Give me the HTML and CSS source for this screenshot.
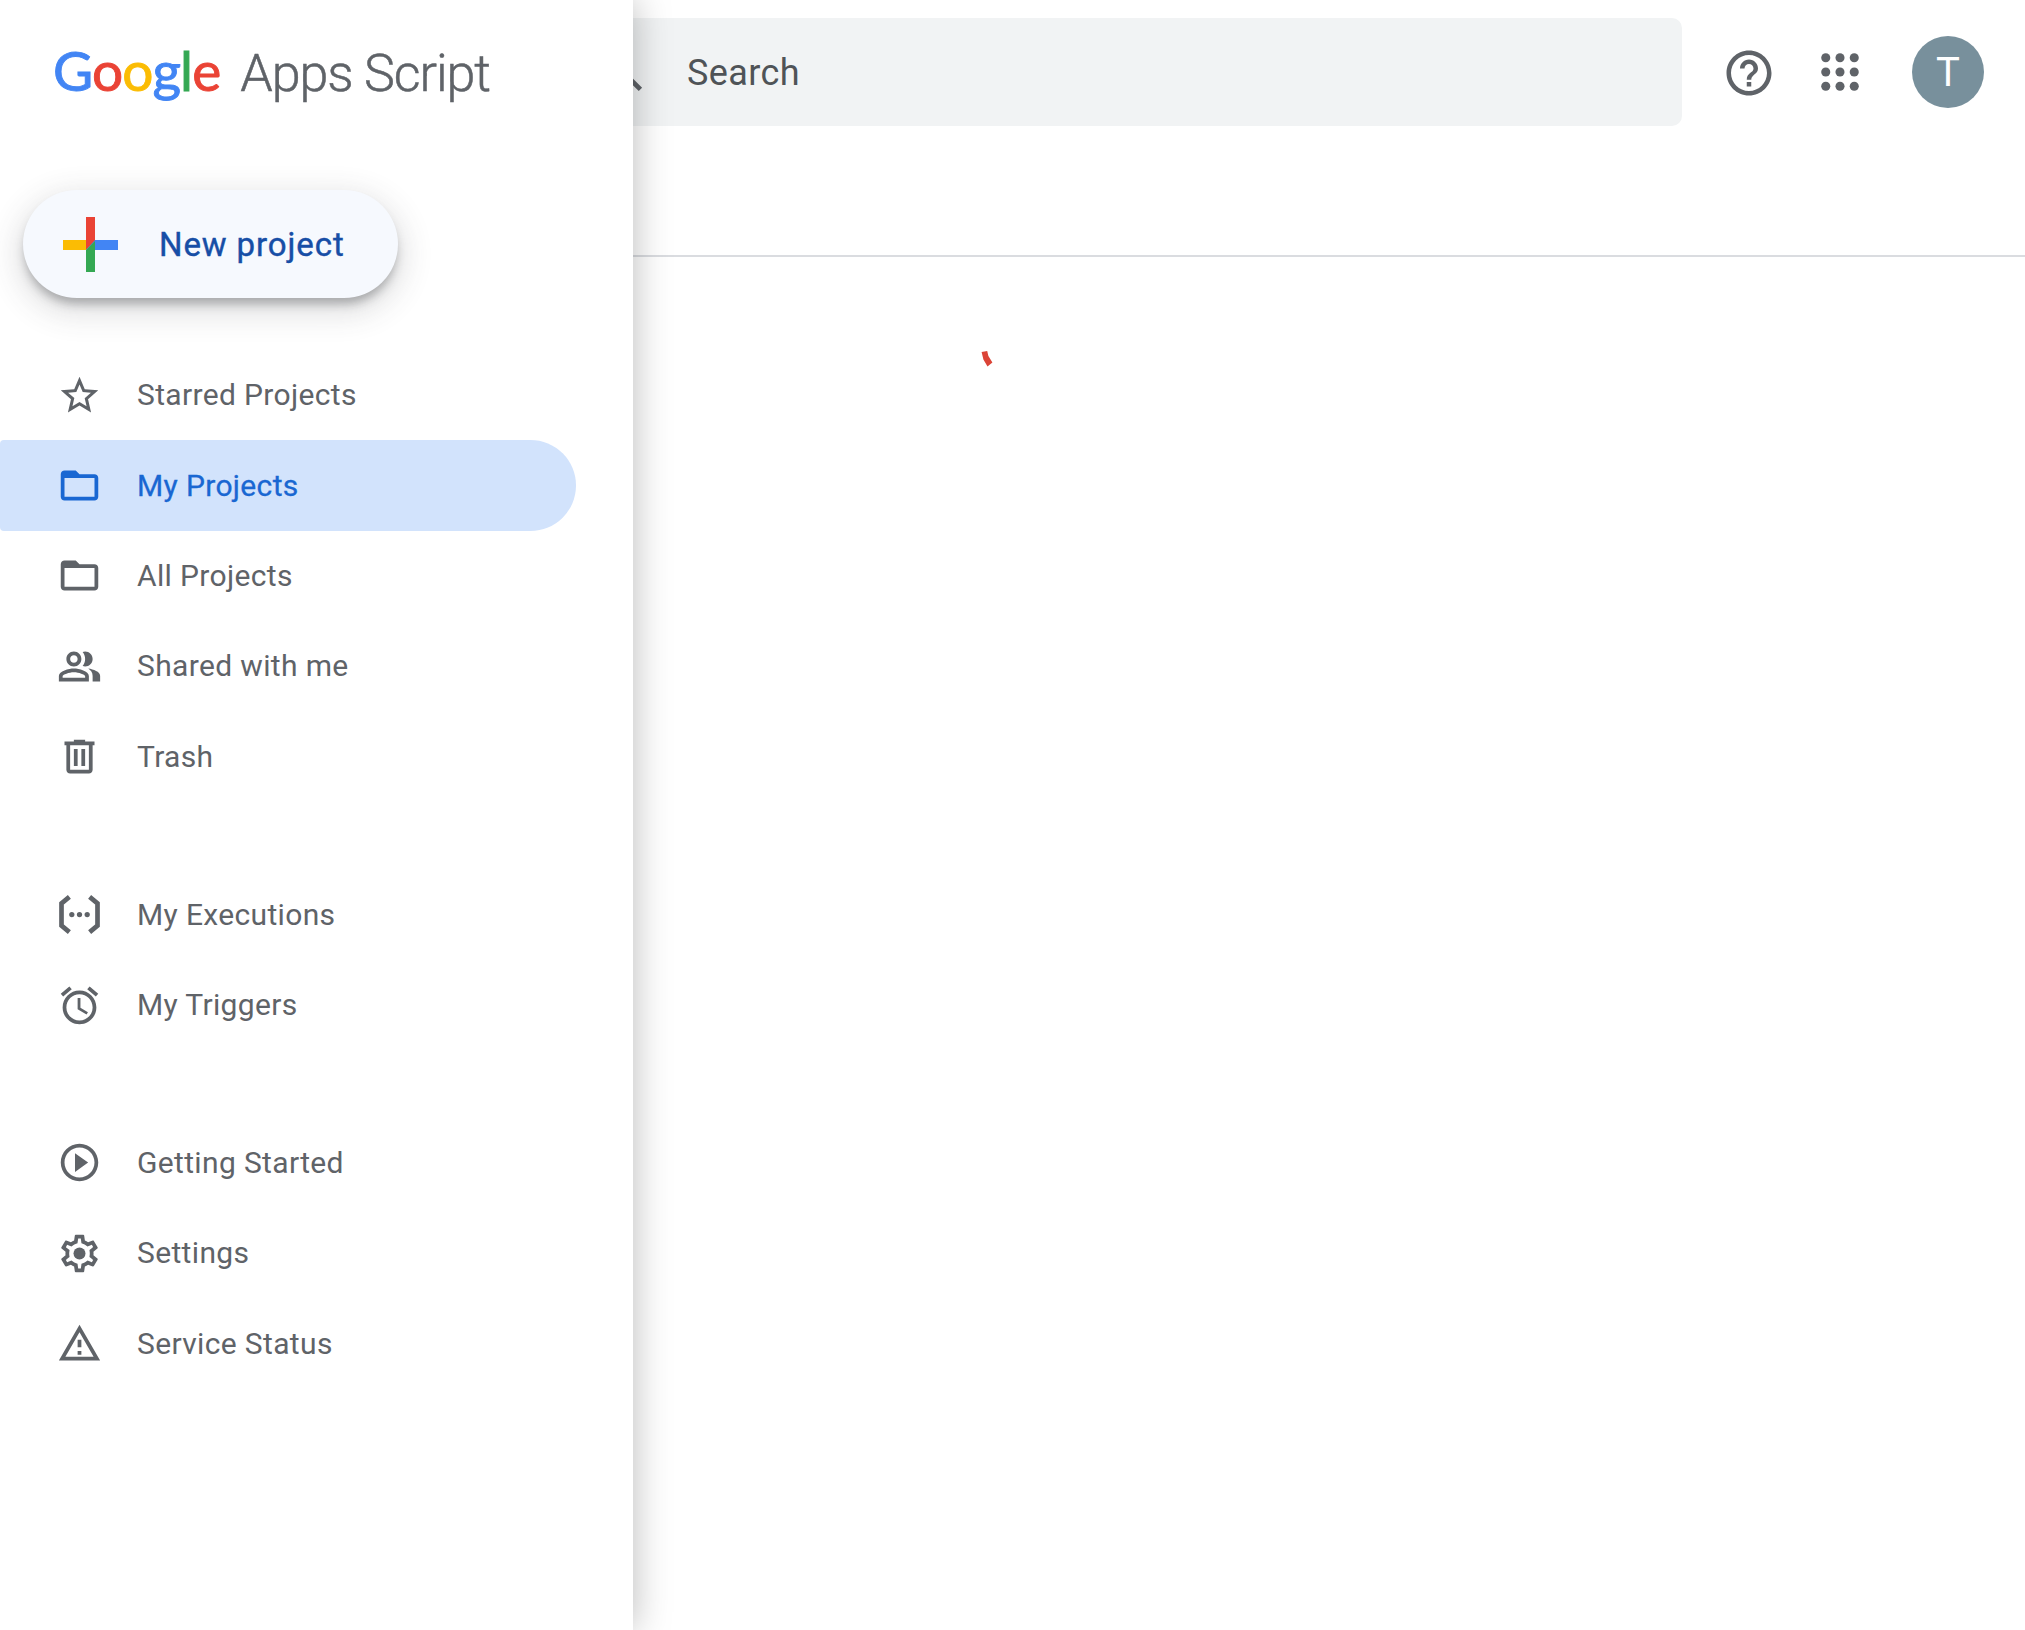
FILE: index.html
```html
<!DOCTYPE html>
<html lang="en">
<head>
<meta charset="utf-8">
<title>Apps Script</title>
<link rel="stylesheet" href="styles.css">
</head>
<body>
<div class="app">
  <main class="main">
    <header class="topbar">
      <div class="search">
        <svg class="search-icon" viewBox="0 0 24 24"><path d="M15.5 14h-.79l-.28-.27A6.47 6.47 0 0 0 16 9.5 6.5 6.5 0 1 0 9.5 16c1.61 0 3.09-.59 4.23-1.57l.27.28v.79l5 4.99L20.49 19l-4.99-5zm-6 0C7.01 14 5 11.99 5 9.5S7.01 5 9.5 5 14 7.01 14 9.5 11.99 14 9.5 14z"/></svg>
        <span class="search-label">Search</span>
      </div>
      <div class="actions">
        <svg class="help" viewBox="0 0 24 24"><path d="M11 18h2v-2h-2v2zm1-16C6.48 2 2 6.48 2 12s4.48 10 10 10 10-4.48 10-10S17.52 2 12 2zm0 18c-4.41 0-8-3.59-8-8s3.59-8 8-8 8 3.59 8 8-3.59 8-8 8zm0-14c-2.21 0-4 1.79-4 4h2c0-1.1.9-2 2-2s2 .9 2 2c0 2-3 1.75-3 5h2c0-2.25 3-2.5 3-5 0-2.21-1.79-4-4-4z"/></svg>
        <svg class="apps" viewBox="0 0 36 36"><circle cx="4.5" cy="4.5" r="4.3"/><circle cx="18" cy="4.5" r="4.3"/><circle cx="31.5" cy="4.5" r="4.3"/><circle cx="4.5" cy="18" r="4.3"/><circle cx="18" cy="18" r="4.3"/><circle cx="31.5" cy="18" r="4.3"/><circle cx="4.5" cy="31.5" r="4.3"/><circle cx="18" cy="31.5" r="4.3"/><circle cx="31.5" cy="31.5" r="4.3"/></svg>
        <div class="avatar">T</div>
      </div>
    </header>
    <div class="tabs"></div>
    <div class="content">
      <svg class="spinner" viewBox="0 0 12 16"><path d="M0.6 1 6.2 0 7.4 5 11.4 11.5 6.5 15.4 2.4 8.6z"/></svg>
    </div>
  </main>

  <aside class="drawer">
    <div class="brand">
      <span class="google"><span class="g-blue">G</span><span class="g-red">o</span><span class="g-yellow">o</span><span class="g-blue">g</span><span class="g-green">l</span><span class="g-red">e</span></span>
      <span class="product">Apps Script</span>
    </div>
    <button class="new-project">
      <svg class="plus" viewBox="0 0 55 55">
        <polygon class="p-red" points="23,0 32,0 32,24 23,33"/>
        <polygon class="p-yellow" points="0,23 23,23 23,33 0,33"/>
        <polygon class="p-blue" points="32,23 55,23 55,33 23,33"/>
        <polygon class="p-green" points="23,33 32,24 32,33 32,55 23,55"/>
      </svg>
      <span>New project</span>
    </button>
    <nav class="nav">
      <ul class="nav-group">
        <li class="nav-item"><svg class="nav-icon" viewBox="0 0 24 24"><path d="M22 9.24l-7.19-.62L12 2 9.19 8.63 2 9.24l5.46 4.73L5.82 21 12 17.27 18.18 21l-1.63-7.03L22 9.24zM12 15.4l-3.76 2.27 1-4.28-3.32-2.88 4.38-.38L12 6.1l1.71 4.04 4.38.38-3.32 2.88 1 4.28L12 15.4z"/></svg><span>Starred Projects</span></li>
        <li class="nav-item is-active"><svg class="nav-icon" viewBox="0 0 24 24"><path d="M20 6h-8l-2-2H4c-1.1 0-1.99.9-1.99 2L2 18c0 1.1.9 2 2 2h16c1.1 0 2-.9 2-2V8c0-1.1-.9-2-2-2zm0 12H4V8h16v10z"/></svg><span>My Projects</span></li>
        <li class="nav-item"><svg class="nav-icon" viewBox="0 0 24 24"><path d="M20 6h-8l-2-2H4c-1.1 0-1.99.9-1.99 2L2 18c0 1.1.9 2 2 2h16c1.1 0 2-.9 2-2V8c0-1.1-.9-2-2-2zm0 12H4V8h16v10z"/></svg><span>All Projects</span></li>
        <li class="nav-item"><svg class="nav-icon" viewBox="0 0 24 24"><path d="M15 8c0-1.42-.5-2.73-1.33-3.76.42-.14.86-.24 1.33-.24 2.21 0 4 1.79 4 4s-1.79 4-4 4c-.43 0-.84-.09-1.23-.21-.03-.01-.06-.02-.1-.03C14.5 10.73 15 9.42 15 8zm1.66 5.13C18.03 14.06 19 15.32 19 17v3h4v-3c0-2.18-3.58-3.47-6.34-3.87zM9 6c-1.1 0-2 .9-2 2s.9 2 2 2 2-.9 2-2-.9-2-2-2m0 9c-2.7 0-5.8 1.29-6 2.01V18h12v-1c-.2-.71-3.3-2-6-2M9 4c2.21 0 4 1.79 4 4s-1.79 4-4 4-4-1.79-4-4 1.79-4 4-4zm0 9c2.67 0 8 1.34 8 4v3H1v-3c0-2.66 5.33-4 8-4z"/></svg><span>Shared with me</span></li>
        <li class="nav-item"><svg class="nav-icon" viewBox="0 0 24 24"><path d="M15 4V3H9v1H4v2h1v13c0 1.1.9 2 2 2h10c1.1 0 2-.9 2-2V6h1V4h-5zm2 15H7V6h10v13zM9 8h2v9H9zm4 0h2v9h-2z"/></svg><span>Trash</span></li>
      </ul>
      <ul class="nav-group">
        <li class="nav-item"><svg class="nav-icon" viewBox="0 0 24 24"><path class="bracket" d="M6.6 2.6 2.4 6.1v11.8l4.2 3.5M17.4 2.6l4.2 3.5v11.8l-4.2 3.5"/><circle cx="7.9" cy="12" r="1.4"/><circle cx="12" cy="12" r="1.4"/><circle cx="16.1" cy="12" r="1.4"/></svg><span>My Executions</span></li>
        <li class="nav-item"><svg class="nav-icon" viewBox="0 0 24 24"><path d="M22 5.72l-4.6-3.86-1.29 1.53 4.6 3.86L22 5.72zM7.88 3.39L6.6 1.86 2 5.71l1.29 1.53 4.59-3.85zM12.5 8H11v6l4.75 2.85.75-1.23-4-2.37V8zM12 4c-4.97 0-9 4.03-9 9s4.02 9 9 9c4.97 0 9-4.03 9-9s-4.03-9-9-9zm0 16c-3.87 0-7-3.13-7-7s3.13-7 7-7 7 3.13 7 7-3.13 7-7 7z"/></svg><span>My Triggers</span></li>
      </ul>
      <ul class="nav-group">
        <li class="nav-item"><svg class="nav-icon" viewBox="0 0 24 24"><path d="M9.6 17l7-5-7-5v10zM12 2C6.48 2 2 6.48 2 12s4.48 10 10 10 10-4.48 10-10S17.52 2 12 2zm0 18c-4.41 0-8-3.59-8-8s3.59-8 8-8 8 3.59 8 8-3.59 8-8 8z"/></svg><span>Getting Started</span></li>
        <li class="nav-item"><svg class="nav-icon" viewBox="0 0 24 24"><path d="M19.43 12.98c.04-.32.07-.64.07-.98 0-.34-.03-.66-.07-.98l2.11-1.65c.19-.15.24-.42.12-.64l-2-3.46c-.09-.16-.26-.25-.44-.25-.06 0-.12.01-.17.03l-2.49 1c-.52-.4-1.08-.73-1.69-.98l-.38-2.65C14.46 2.18 14.25 2 14 2h-4c-.25 0-.46.18-.49.42l-.38 2.65c-.61.25-1.17.59-1.69.98l-2.49-1c-.06-.02-.12-.03-.18-.03-.17 0-.34.09-.43.25l-2 3.46c-.13.22-.07.49.12.64l2.11 1.65c-.04.32-.07.65-.07.98 0 .33.03.66.07.98l-2.11 1.65c-.19.15-.24.42-.12.64l2 3.46c.09.16.26.25.44.25.06 0 .12-.01.17-.03l2.49-1c.52.4 1.08.73 1.69.98l.38 2.65c.03.24.24.42.49.42h4c.25 0 .46-.18.49-.42l.38-2.65c.61-.25 1.17-.59 1.69-.98l2.49 1c.06.02.12.03.18.03.17 0 .34-.09.43-.25l2-3.46c.12-.22.07-.49-.12-.64l-2.11-1.65zm-1.98-1.71c.04.31.05.52.05.73 0 .21-.02.43-.05.73l-.14 1.13.89.7 1.08.84-.7 1.21-1.27-.51-1.04-.42-.9.68c-.43.32-.84.56-1.25.73l-1.06.43-.16 1.13-.2 1.35h-1.4l-.19-1.35-.16-1.13-1.06-.43c-.43-.18-.83-.41-1.23-.71l-.91-.7-1.06.43-1.27.51-.7-1.21 1.08-.84.89-.7-.14-1.13c-.03-.31-.05-.54-.05-.74s.02-.43.05-.73l.14-1.13-.89-.7-1.08-.84.7-1.21 1.27.51 1.04.42.9-.68c.43-.32.84-.56 1.25-.73l1.06-.43.16-1.13.2-1.35h1.39l.19 1.35.16 1.13 1.06.43c.43.18.83.41 1.23.71l.91.7 1.06-.43 1.27-.51.7 1.21-1.07.85-.89.7.14 1.13z"/><circle cx="12" cy="12" r="3.2"/></svg><span>Settings</span></li>
        <li class="nav-item"><svg class="nav-icon" viewBox="0 0 24 24"><path d="M12 5.99L19.53 19H4.47L12 5.99M12 2L1 21h22L12 2zm1 14h-2v2h2v-2zm0-6h-2v4h2v-4z"/></svg><span>Service Status</span></li>
      </ul>
    </nav>
  </aside>
</div>
</body>
</html>
```
FILE: styles.css
```css
* { box-sizing: border-box; }
html, body { margin: 0; height: 100%; background: #fff; overflow: hidden; }
body { font-family: Roboto, "Liberation Sans", sans-serif; color: #5f6368; }
.app { position: relative; height: 1630px; }

.main { height: 100%; padding-left: 560px; display: flex; flex-direction: column; }
.topbar { height: 144px; padding: 18px 41px 18px 0; display: flex; align-items: center; flex: none; }
.search { width: 1122px; height: 108px; background: #f1f3f4; border-radius: 10px; display: flex; align-items: center; padding-left: 36px; flex: none; }
.search-icon { width: 54px; height: 54px; fill: #5f6368; flex: none; }
.search-label { font-size: 36px; margin-left: 37px; color: #4f5357; letter-spacing: .4px; padding-top: 2px; }
.actions { flex: 1; display: flex; align-items: center; padding-left: 40px; }
.help { width: 54px; height: 54px; fill: #5f6368; flex: none; margin-top: 1px; }
.apps { width: 38px; height: 38px; fill: #5f6368; margin-left: 45px; flex: none; }
.avatar { width: 72px; height: 72px; border-radius: 50%; background: #78909c; color: #fff; font-size: 40px; display: flex; align-items: center; justify-content: center; margin-left: 53px; flex: none; }
.tabs { height: 113px; border-bottom: 2px solid #dadce0; flex: none; }
.content { flex: 1; padding: 94px 0 0 421px; }
.spinner { display: block; width: 12px; height: 16px; fill: #db4437; }

.drawer { position: absolute; left: 0; top: 0; bottom: 0; width: 633px; background: #fff; box-shadow: 0 0 36px rgba(0, 0, 0, .28); }
.brand { height: 146px; padding: 33px 0 0 53px; display: flex; align-items: baseline; }
.google { font-family: Lato, Roboto, sans-serif; font-size: 55px; font-weight: 400; letter-spacing: -.9px; line-height: 74px; -webkit-text-stroke: .9px; }
.g-blue { color: #4285f4; }
.g-red { color: #ea4335; }
.g-yellow { color: #fbbc04; }
.g-green { color: #34a853; }
.product { font-size: 52px; font-weight: 300; margin-left: 20px; letter-spacing: -1.1px; color: #5f6368; -webkit-text-stroke: .5px #5f6368; }

.new-project { display: flex; align-items: center; width: 375px; height: 108px; margin: 44px 0 0 23px; padding: 0 0 0 40px; border: 0; border-radius: 54px; background: #f6f9fe; color: #174ea6; font: 400 33px Roboto, sans-serif; letter-spacing: .9px; -webkit-text-stroke: .4px #174ea6; box-shadow: 0 8px 10px -2px rgba(60, 64, 67, .35), 0 10px 30px 6px rgba(60, 64, 67, .16); }
.plus { width: 55px; height: 55px; margin-right: 41px; flex: none; }
.p-red { fill: #ea4335; }
.p-yellow { fill: #fbbc04; }
.p-blue { fill: #4285f4; }
.p-green { fill: #34a853; }

.nav { margin-top: 52px; }
.nav-group { list-style: none; margin: 0 0 67.5px; padding: 0; }
.nav-item { height: 90.4px; display: flex; align-items: center; width: 576px; padding-left: 56.5px; font-size: 30px; letter-spacing: .35px; color: #5f6368; }
.nav-item span { margin-top: -1px; }
.nav-item.is-active { background: #d2e3fc; color: #1967d2; border-radius: 4px 46px 46px 4px; }
.nav-icon { width: 45px; height: 45px; fill: #5f6368; margin-right: 35.5px; flex: none; }
.is-active .nav-icon { fill: #1967d2; }
.is-active span { -webkit-text-stroke: .3px #1967d2; }
.bracket { fill: none; stroke: #5f6368; stroke-width: 2.5; }
```
